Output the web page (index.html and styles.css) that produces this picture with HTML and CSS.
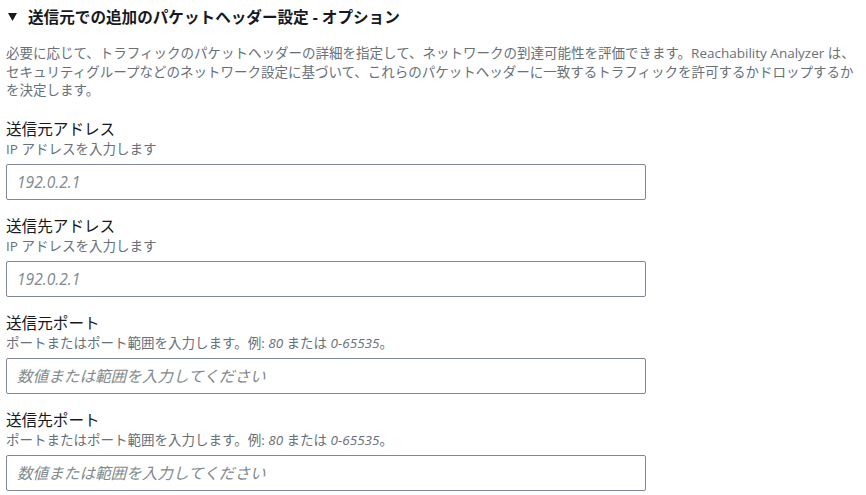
FILE: index.html
```html
<!DOCTYPE html>
<html lang="ja">
<head>
    <meta charset="UTF-8">
    <meta name="viewport" content="width=device-width, initial-scale=1.0">
    <title>パケットヘッダー設定</title>
    <link rel="stylesheet" href="styles.css">
</head>
<body>

    <div class="section">
        <div class="section-header">
            <svg class="caret" width="9" height="8" viewBox="0 0 9 8"><polygon points="0,0 9,0 4.5,8" fill="#16191f"/></svg>
            <h2>送信元での追加のパケットヘッダー設定 - オプション</h2>
        </div>

        <p class="section-desc">必要に応じて、トラフィックのパケットヘッダーの詳細を指定して、ネットワークの到達可能性を評価できます。Reachability Analyzer は、セキュリティグループなどのネットワーク設定に基づいて、これらのパケットヘッダーに一致するトラフィックを許可するかドロップするかを決定します。</p>

        <div class="field">
            <label class="field-label" for="src-addr">送信元アドレス</label>
            <div class="field-desc">IP アドレスを入力します</div>
            <input class="field-input" id="src-addr" type="text" placeholder="192.0.2.1">
        </div>

        <div class="field">
            <label class="field-label" for="dst-addr">送信先アドレス</label>
            <div class="field-desc">IP アドレスを入力します</div>
            <input class="field-input" id="dst-addr" type="text" placeholder="192.0.2.1">
        </div>

        <div class="field">
            <label class="field-label" for="src-port">送信元ポート</label>
            <div class="field-desc">ポートまたはポート範囲を入力します。例: <em>80</em> または <em>0-65535</em>。</div>
            <input class="field-input" id="src-port" type="text" placeholder="数値または範囲を入力してください">
        </div>

        <div class="field">
            <label class="field-label" for="dst-port">送信先ポート</label>
            <div class="field-desc">ポートまたはポート範囲を入力します。例: <em>80</em> または <em>0-65535</em>。</div>
            <input class="field-input" id="dst-port" type="text" placeholder="数値または範囲を入力してください">
        </div>
    </div>

</body>
</html>
```

FILE: styles.css
```css
body {
    margin: 0;
    font-family: "Open Sans", "Noto Sans CJK JP", sans-serif;
    color: #16191f;
    background: #fff;
}
.section {
    padding: 6px 4px 0 6px;
}
.section-header {
    display: flex;
    align-items: center;
    gap: 11px;
    height: 22px;
    padding-left: 2px;
}
.caret {
    display: block;
}
h2 {
    margin: 0;
    font-size: 15.6px;
    font-weight: bold;
    line-height: 22px;
}
.section-desc {
    margin: 16px 0 18px;
    font-size: 13.5px;
    line-height: 18.5px;
    color: #687078;
}
.field {
    display: flex;
    flex-direction: column;
    margin-bottom: 15px;
}
.field-label {
    font-size: 15.6px;
    line-height: 22px;
}
.field-desc {
    font-size: 13.5px;
    line-height: 18px;
    color: #687078;
    margin-bottom: 6px;
}
.field-desc em {
    font-style: italic;
}
.field-input {
    box-sizing: border-box;
    width: 640px;
    height: 36px;
    margin: 0;
    padding: 0 10px;
    border: 1px solid #7d8998;
    border-radius: 2px;
    font-family: inherit;
    font-size: 15.6px;
    color: #16191f;
}
.field-input::placeholder {
    color: #7f8b8c;
    font-style: italic;
}
```
